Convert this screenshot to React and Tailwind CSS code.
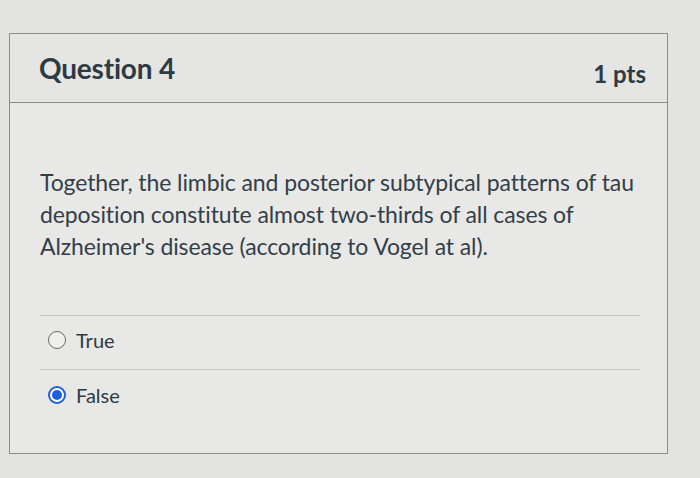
export default function App() {
  return (
    <div
      className="w-[700px] h-[478px] overflow-hidden bg-[#e3e3e1] pt-[33px] pl-[9px] text-[#2d3b45]"
      style={{ fontFamily: "Lato, 'Open Sans', sans-serif" }}
    >
      <div className="w-[659px] h-[421px] border border-[#8c8c8a] bg-[#e8e8e6]">
        <div className="h-[69px] flex items-center justify-between pl-[29px] pr-[21px] border-b border-[#8c8c8a] bg-[#e5e5e3]">
          <h2 className="text-[28px] font-bold tracking-[-0.2px] text-[#2d3b45]">Question 4</h2>
          <span className="text-[24px] font-bold mt-3 text-[#2d3b45]">1 pts</span>
        </div>
        <div className="pl-[30px] pr-[27px] pt-[63px]">
          <p className="text-[23px] leading-[32px] tracking-[-0.1px] w-[620px] text-[#333f48]">
            Together, the limbic and posterior subtypical patterns of tau
            deposition constitute almost two-thirds of all cases of
            Alzheimer's disease (according to Vogel at al).
          </p>
          <div className="mt-[53px] border-t border-[#c6c6c4]">
            <label className="h-[53px] flex items-center gap-[10px] pl-[8px] pb-[5px] text-[20px]">
              <span className="w-[18px] h-[18px] rounded-full border border-[#6b6b6b] bg-[#eeeeec]" />
              True
            </label>
          </div>
          <div className="border-t border-[#c6c6c4]">
            <label className="h-[52px] flex items-center gap-[10px] pl-[8px] pb-[2px] text-[20px]">
              <span className="w-[18px] h-[18px] rounded-full border-2 border-[#1f5fd6] bg-white flex items-center justify-center">
                <span className="w-[10px] h-[10px] rounded-full bg-[#1a5fe0]" />
              </span>
              False
            </label>
          </div>
        </div>
      </div>
    </div>
  );
}
